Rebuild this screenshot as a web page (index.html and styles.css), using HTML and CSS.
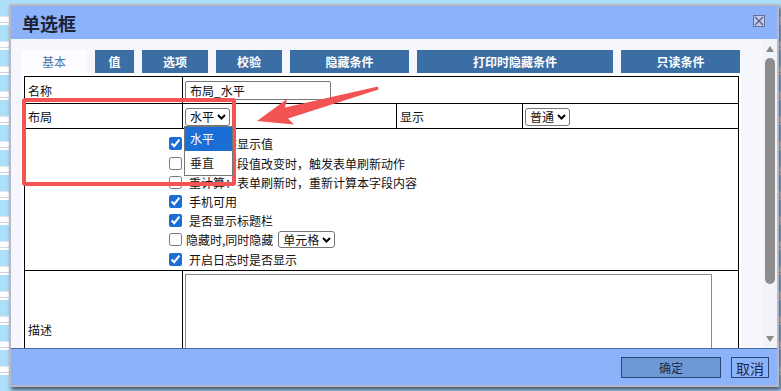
FILE: index.html
```html
<!DOCTYPE html>
<html lang="zh-CN">
  <head>
    <meta charset="UTF-8" />
    <meta name="viewport" content="width=device-width, initial-scale=1.0" />
    <title>单选框</title>
    <link rel="stylesheet" href="styles.css">
  </head>
  <body>
    <div class="dialog">
      <div class="titlebar">
        <span class="title">单选框</span>
        <span class="close">
          <svg width="10" height="10" viewBox="0 0 10 10">
            <path d="M1 1 L9 9 M9 1 L1 9" stroke="#5c5c7c" stroke-width="1.2" />
          </svg>
        </span>
      </div>

      <div class="main">
        <div class="content">
          <div class="tabs">
            <div class="tab active w66">基本</div>
            <div class="tab w39">值</div>
            <div class="tab w66">选项</div>
            <div class="tab w66">校验</div>
            <div class="tab w119">隐藏条件</div>
            <div class="tab w196">打印时隐藏条件</div>
            <div class="tab w119">只读条件</div>
          </div>

          <div class="panel">
            <table class="form">
              <colgroup>
                <col class="c1" />
                <col class="c2" />
                <col class="c3" />
                <col class="c4" />
              </colgroup>
              <tr class="r1">
                <td>名称</td>
                <td colspan="3" class="field">
                  <input class="text" type="text" value="布局_水平" />
                </td>
              </tr>
              <tr class="r2">
                <td>布局</td>
                <td class="field">
                  <span class="select w45">
                    水平
                    <svg class="chev" width="9" height="6" viewBox="0 0 9 6">
                      <path d="M1 1 L4.5 4.5 L8 1" fill="none" stroke="#000" stroke-width="2" />
                    </svg>
                    <span class="dropdown">
                      <span class="option selected">水平</span>
                      <span class="option">垂直</span>
                    </span>
                  </span>
                </td>
                <td>显示</td>
                <td class="field">
                  <span class="select w45">
                    普通
                    <svg class="chev" width="9" height="6" viewBox="0 0 9 6">
                      <path d="M1 1 L4.5 4.5 L8 1" fill="none" stroke="#000" stroke-width="2" />
                    </svg>
                  </span>
                </td>
              </tr>
              <tr class="r3">
                <td colspan="4">
                  <div class="checks">
                    <label class="check"><input type="checkbox" checked />只读状态显示值</label>
                    <label class="check"><input type="checkbox" />刷新：字段值改变时，触发表单刷新动作</label>
                    <label class="check"><input type="checkbox" />重计算：表单刷新时，重新计算本字段内容</label>
                    <label class="check"><input type="checkbox" checked />手机可用</label>
                    <label class="check"><input type="checkbox" checked />是否显示标题栏</label>
                    <label class="check tight"><input type="checkbox" />隐藏时,同时隐藏
                      <span class="select small w57">
                        单元格
                        <svg class="chev" width="9" height="6" viewBox="0 0 9 6">
                          <path d="M1 1 L4.5 4.5 L8 1" fill="none" stroke="#000" stroke-width="2" />
                        </svg>
                      </span>
                    </label>
                    <label class="check"><input type="checkbox" checked />开启日志时是否显示</label>
                  </div>
                </td>
              </tr>
              <tr class="r4">
                <td>描述</td>
                <td colspan="3" class="field top">
                  <textarea class="memo"></textarea>
                </td>
              </tr>
            </table>
          </div>
        </div>

        <div class="scrollbar">
          <span class="arrow-up"></span>
          <span class="thumb"></span>
          <span class="arrow-down"></span>
        </div>
      </div>

      <div class="footer">
        <button class="btn ok">确定</button>
        <button class="btn cancel">取消</button>
      </div>
    </div>

    <!-- annotation on top of the screenshot -->
    <div class="mark"></div>
    <svg class="pointer" width="781" height="391" viewBox="0 0 781 391">
      <polygon
        points="257,121 287,99 285,107.5 378,86.5 378.5,89.5 288,118.5 294,124.5"
        fill="#f25454"
      />
    </svg>
  </body>
</html>
```

FILE: styles.css
```css
body {
  margin: 0;
  height: 391px;
  overflow: hidden;
  position: relative;
  font-family: "Noto Sans CJK SC", sans-serif;
  font-size: 12px;
  color: #111;
  background: repeating-linear-gradient(
    180deg,
    #aedff9 0 16px,
    #dfe6f0 16px 17px,
    #fff 17px 22px,
    #cdd5e1 22px 23px,
    #fff 23px 25px
  );
}

.dialog {
  margin: 4px 0 0 9px;
  width: 766px;
  height: 379px;
  border: 2px solid #b8b8c8;
  box-shadow: 2px 3px 4px rgba(40, 40, 60, 0.75);
  display: flex;
  flex-direction: column;
}

.titlebar {
  height: 33px;
  flex-shrink: 0;
  background-color: #8cb2fa;
  display: flex;
  align-items: center;
  justify-content: space-between;
  padding: 0 12px 0 11px;
}
.title {
  font-size: 18px;
  font-weight: bold;
  color: #1e2233;
}
.close {
  width: 10px;
  height: 10px;
  border: 1px solid #6c6c8c;
  background-color: #bccbf4;
  display: flex;
  margin-top: -3px;
}

.main {
  flex: 1;
  min-height: 0;
  display: flex;
  background-color: #f5f7fd;
  overflow: hidden;
}
.content {
  flex: 1;
  padding: 11px 0 0 10px;
  overflow: hidden;
}

.tabs {
  display: flex;
  gap: 8px;
  height: 23px;
}
.tab {
  background-color: #3b6ea5;
  color: #fff;
  font-weight: bold;
  text-align: center;
  line-height: 23px;
}
.tab.active {
  background-color: #fdfdff;
  color: #4a7bb4;
  font-weight: normal;
}
.w39 { width: 39px; }
.w66 { width: 66px; }
.w119 { width: 119px; }
.w196 { width: 196px; }

.panel {
  width: 714px;
  padding: 3px 3px 0 3px;
  background-color: #fff;
}

.form {
  border-collapse: collapse;
  table-layout: fixed;
  width: 714px;
}
.c1 { width: 158px; }
.c2 { width: 214px; }
.c3 { width: 126px; }
.c4 { width: 216px; }

.form td {
  border: 1px solid #000;
  padding: 0 3px;
  line-height: 17px;
}
.form td.field {
  padding-left: 2px;
}
.form td.top {
  vertical-align: top;
  padding-top: 3px;
}
.r1 { height: 27px; }
.r2 { height: 25px; }
.r3 { height: 142px; }
.r4 { height: 118px; }

.text {
  display: block;
  width: 146px;
  height: 19px;
  box-sizing: border-box;
  border: 1px solid #767676;
  border-radius: 2px;
  padding: 0 4px;
  font-family: inherit;
  font-size: 12px;
  color: #111;
}

.select {
  position: relative;
  display: inline-flex;
  align-items: center;
  justify-content: space-between;
  box-sizing: border-box;
  height: 18px;
  border: 1px solid #767676;
  border-radius: 3px;
  padding: 0 3px 0 4px;
  background-color: #fff;
  font-size: 12px;
  vertical-align: middle;
}
.select.small {
  height: 17px;
  margin-left: 5px;
}
.w45 { width: 45px; }
.w57 { width: 57px; }
.chev {
  margin-top: 1px;
}

.dropdown {
  position: absolute;
  left: -2px;
  top: 17px;
  width: 47px;
  border: 1px solid #767676;
  background-color: #fff;
  display: flex;
  flex-direction: column;
  z-index: 2;
}
.option {
  height: 24px;
  line-height: 24px;
  padding-left: 5px;
  color: #222;
}
.option.selected {
  background-color: #1b6ed6;
  color: #fff;
}

.checks {
  padding: 4px 0 0 137px;
}
.check {
  display: flex;
  align-items: center;
  height: 19.2px;
  white-space: nowrap;
}
.check input {
  width: 13px;
  height: 13px;
  margin: 0 7px 0 4px;
  accent-color: #1b6ed6;
}
.check.tight input {
  margin-right: 4px;
}

.memo {
  display: block;
  width: 527px;
  height: 108px;
  box-sizing: border-box;
  border: 1px solid #8a8a8a;
  resize: none;
}

.scrollbar {
  width: 14px;
  flex-shrink: 0;
  background-color: #f1f3f9;
  display: flex;
  flex-direction: column;
  align-items: center;
  padding: 7px 0 6px;
  box-sizing: border-box;
}
.arrow-up,
.arrow-down {
  width: 0;
  height: 0;
  border-left: 4px solid transparent;
  border-right: 4px solid transparent;
}
.arrow-up {
  border-bottom: 6px solid #8a8a8a;
}
.arrow-down {
  border-top: 6px solid #8a8a8a;
  margin-top: auto;
}
.thumb {
  width: 10px;
  height: 226px;
  margin-top: 6px;
  border-radius: 5px;
  background-color: #8c8c8c;
}

.footer {
  height: 36px;
  flex-shrink: 0;
  border-top: 1px solid #4a6aa5;
  background-color: #8cb2fa;
  display: flex;
  align-items: center;
  justify-content: flex-end;
  gap: 10px;
  padding-right: 8px;
}
.btn {
  height: 21px;
  padding: 0;
  border: 1px solid #2c4472;
  font-family: inherit;
  color: #1b2848;
}
.btn.ok {
  width: 100px;
  background-color: #6f98d6;
  font-size: 12px;
}
.btn.cancel {
  width: 38px;
  background-color: #8cb2fa;
  font-size: 14px;
}

/* red annotation box and arrow */
.mark {
  position: absolute;
  left: 22px;
  top: 98px;
  width: 206px;
  height: 80px;
  border: 4px solid #f25454;
  border-radius: 3px;
}
.pointer {
  position: absolute;
  left: 0;
  top: 0;
  pointer-events: none;
}
```
